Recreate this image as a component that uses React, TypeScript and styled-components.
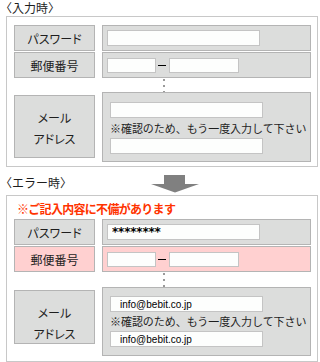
import React from 'react';
import styled, { createGlobalStyle } from 'styled-components';

type Tone = 'gray' | 'pink';

const GlobalStyle = createGlobalStyle`
    html, body {
        margin: 0;
        padding: 0;
        background: #ffffff;
    }
    body {
        font-family: 'Noto Sans CJK JP', 'Noto Sans', sans-serif;
        color: #1e1e1e;
    }
`;

const Page = styled.div`
    width: 320px;
    height: 362px;
    overflow: hidden;
`;

const Caption = styled.div`
    font-size: 12px;
    line-height: 16px;
    height: 16px;
    white-space: nowrap;
`;

const Panel = styled.div<{ $bottom: number }>`
    box-sizing: border-box;
    width: 312px;
    margin-left: 6px;
    border: 1px solid #c8c8c8;
    padding: 0 6px ${(p) => p.$bottom}px 7px;
`;

const ErrorMessage = styled.div`
    font-size: 12px;
    font-weight: bold;
    line-height: 16px;
    color: #ff3300;
    letter-spacing: -0.7px;
    padding: 5px 0 0 3px;
    margin-bottom: 2px;
    white-space: nowrap;
`;

const Row = styled.div<{ $gap?: number; $top?: number }>`
    display: grid;
    grid-template-columns: 81px 209px;
    column-gap: 7px;
    align-items: start;
    margin-top: ${(p) => p.$top ?? 0}px;
    margin-bottom: ${(p) => p.$gap ?? 0}px;
`;

const Cell = styled.div<{ $tone: Tone; $height: number }>`
    box-sizing: border-box;
    height: ${(p) => p.$height}px;
    background: ${(p) => (p.$tone === 'pink' ? '#ffd0d0' : '#dcdddc')};
    border: 1px solid #b4b4b4;
`;

const Label = styled(Cell)<{ $offset?: number }>`
    display: flex;
    align-items: center;
    justify-content: center;
    font-size: 12px;
    font-feature-settings: 'palt';
    margin-top: ${(p) => p.$offset ?? 0}px;
`;

const TallLabel = styled(Cell)<{ $offset: number }>`
    display: flex;
    flex-direction: column;
    align-items: center;
    padding-top: 11px;
    font-size: 12px;
    line-height: 21px;
    font-feature-settings: 'palt';
    margin-top: ${(p) => p.$offset}px;
`;

const Value = styled(Cell)`
    display: flex;
    align-items: center;
    padding-left: 4px;
`;

const MailValue = styled(Cell)<{ $pad: number }>`
    display: flex;
    flex-direction: column;
    padding: ${(p) => p.$pad}px 0 0 7px;
`;

const Field = styled.input<{ $w: number; $h?: number }>`
    box-sizing: border-box;
    width: ${(p) => p.$w}px;
    height: ${(p) => p.$h ?? 16}px;
    margin: 0;
    padding: 0 0 0 4px;
    border: 1px solid #c4c4c4;
    border-radius: 0;
    background: #fdfefd;
    outline: none;
    color: #000;
    font-family: 'DejaVu Sans', sans-serif;
    font-size: 12px;
    font-weight: bold;
    letter-spacing: -0.2px;
`;

const MailField = styled(Field)`
    padding-left: 9px;
    font-family: 'Liberation Sans', Arial, sans-serif;
    font-size: 10px;
    font-weight: normal;
    letter-spacing: 0;
`;

const Dash = styled.span`
    display: block;
    width: 8px;
    height: 1px;
    background: #000;
    margin: 0 3px 0 2px;
`;

const Note = styled.div<{ $line: number }>`
    font-size: 11px;
    line-height: ${(p) => p.$line}px;
    height: ${(p) => p.$line}px;
    white-space: nowrap;
    letter-spacing: -0.05px;
`;

const Dots = styled.div<{ $h: number }>`
    grid-column: 2;
    width: 2px;
    height: ${(p) => p.$h}px;
    margin-left: 61px;
    background: repeating-linear-gradient(
        to bottom,
        transparent 0 1px,
        #9a9a9a 1px 3px,
        transparent 3px 6px
    );
`;

const Between = styled.div`
    display: flex;
    align-items: flex-start;
    height: 28px;
    padding-top: 8px;
    box-sizing: border-box;
`;

const BetweenCaption = styled(Caption)`
    width: 151px;
`;

const DownArrow = () => (
    <svg width="48" height="18" viewBox="0 0 48 18">
        <rect x="13" y="0" width="21" height="10" fill="#808080" />
        <polygon points="0,9 48,9 24,17.5" fill="#808080" />
    </svg>
);

interface MailProps {
    tone: Tone;
    labelHeight: number;
    labelOffset: number;
    valueHeight: number;
    pad: number;
    noteLine: number;
    mail?: string;
}

const MailRow = ({ tone, labelHeight, labelOffset, valueHeight, pad, noteLine, mail }: MailProps) => (
    <Row>
        <TallLabel $tone={tone} $height={labelHeight} $offset={labelOffset}>
            <span>メール</span>
            <span>アドレス</span>
        </TallLabel>
        <MailValue $tone={tone} $height={valueHeight} $pad={pad}>
            <MailField $w={153} readOnly value={mail ?? ''} />
            <Note $line={noteLine}>※確認のため、もう一度入力して下さい</Note>
            <MailField $w={153} readOnly value={mail ?? ''} />
        </MailValue>
    </Row>
);

const PostalRow = ({ tone, gap }: { tone: Tone; gap?: number }) => (
    <Row $gap={gap}>
        <Label $tone={tone} $height={26}>
            郵便番号
        </Label>
        <Value $tone={tone} $height={26}>
            <Field $w={49} $h={15} readOnly value="" />
            <Dash />
            <Field $w={70} $h={15} readOnly value="" />
        </Value>
    </Row>
);

const PasswordRow = ({ value }: { value: string }) => (
    <Row $gap={1}>
        <Label $tone="gray" $height={26}>
            パスワード
        </Label>
        <Value $tone="gray" $height={26}>
            <Field $w={153} readOnly value={value} />
        </Value>
    </Row>
);

const App = () => {
    return (
        <Page>
            <GlobalStyle />
            <Caption>〈入力時〉</Caption>
            <Panel $bottom={4}>
                <Row $top={8} />
                <PasswordRow value="" />
                <PostalRow tone="gray" />
                <Row>
                    <Dots $h={14} />
                </Row>
                <MailRow
                    tone="gray"
                    labelHeight={63}
                    labelOffset={3}
                    valueHeight={70}
                    pad={9}
                    noteLine={20}
                />
            </Panel>
            <Between>
                <BetweenCaption>〈エラー時〉</BetweenCaption>
                <DownArrow />
            </Between>
            <Panel $bottom={5}>
                <ErrorMessage>※ご記入内容に不備があります</ErrorMessage>
                <PasswordRow value="********" />
                <PostalRow tone="pink" />
                <Row>
                    <Dots $h={15} />
                </Row>
                <MailRow
                    tone="gray"
                    labelHeight={54}
                    labelOffset={3}
                    valueHeight={69}
                    pad={8}
                    noteLine={19}
                    mail="info@bebit.co.jp"
                />
            </Panel>
        </Page>
    );
};

export default App;
